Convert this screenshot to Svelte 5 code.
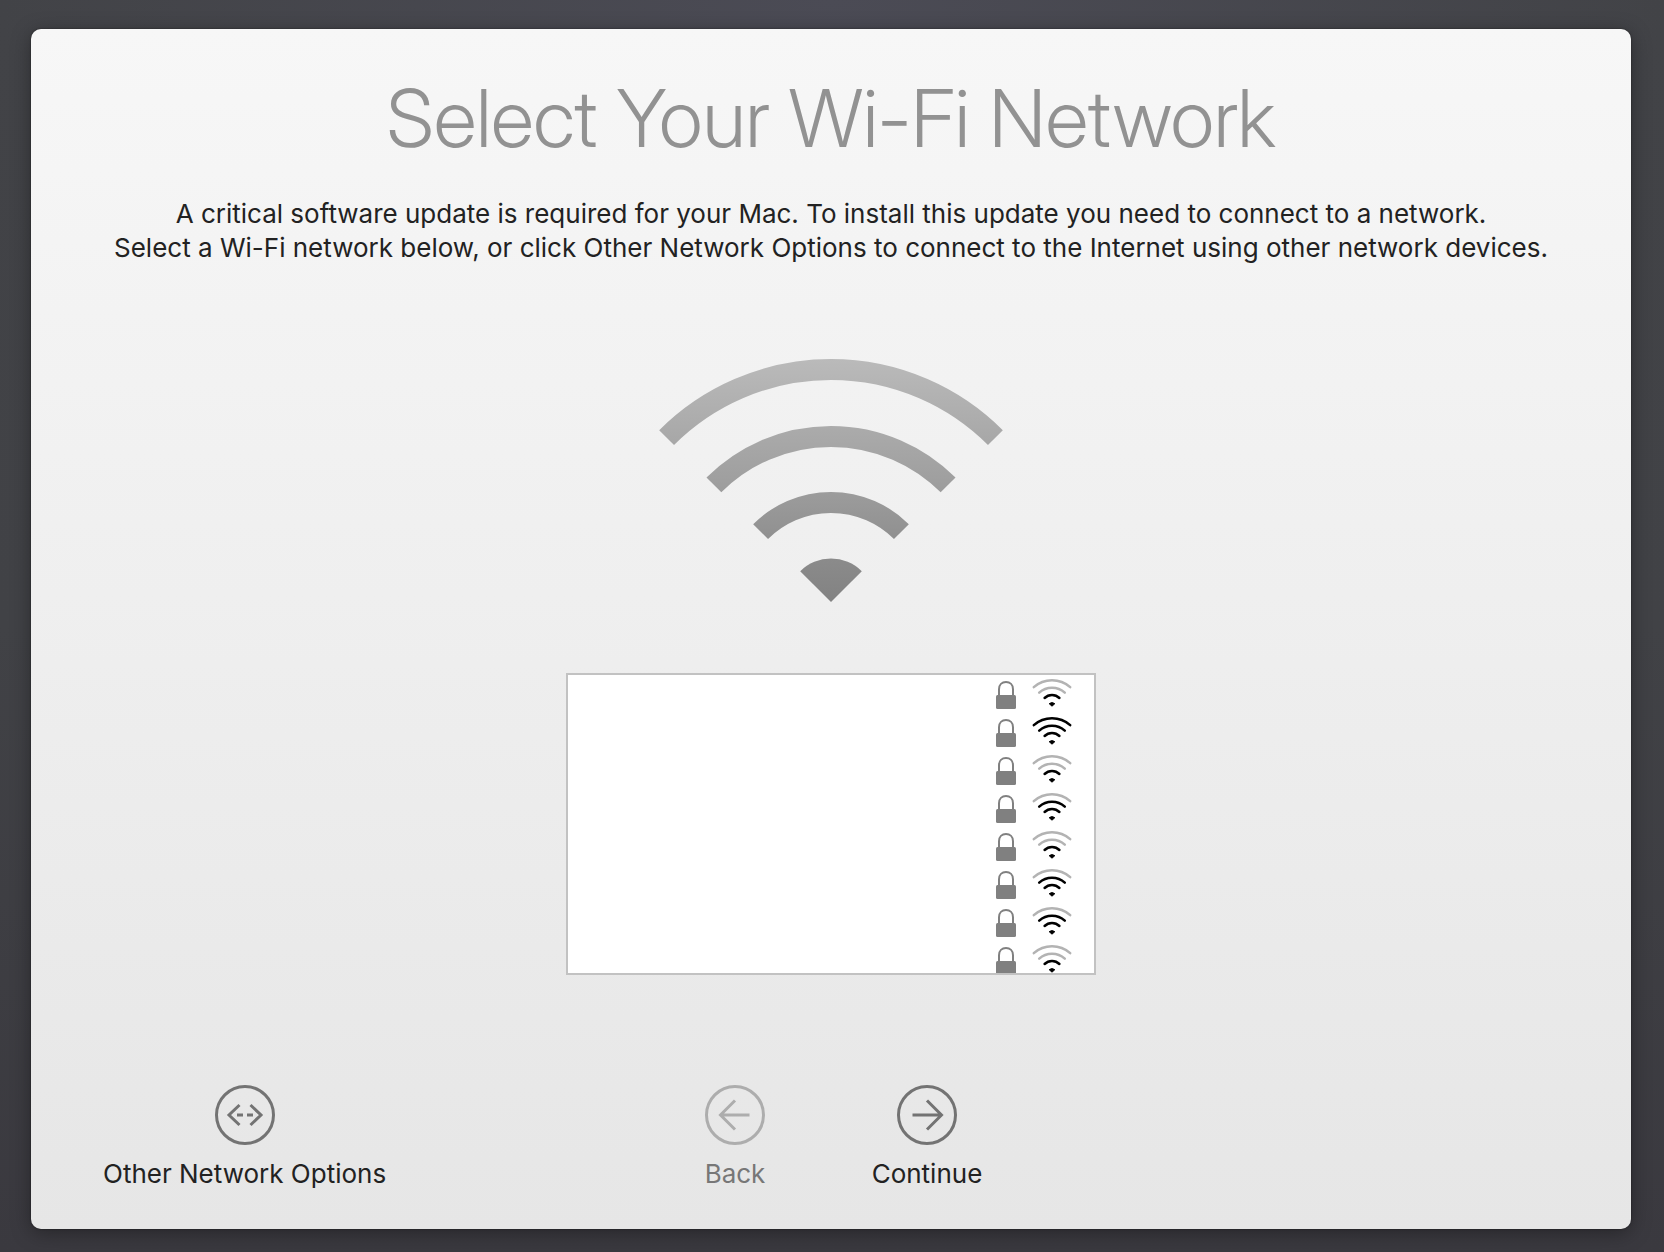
<script>
  // strength: number of lit arcs above the dot
  const networks = [
    { strength: 1 },
    { strength: 3 },
    { strength: 1 },
    { strength: 2 },
    { strength: 1 },
    { strength: 2 },
    { strength: 2 },
    { strength: 1 },
  ];
</script>

<main class="screen">
  <section class="panel" aria-labelledby="title">
    <h1 id="title">Select Your Wi-Fi Network</h1>
    <p class="intro">
      A critical software update is required for your Mac. To install this update you need to connect to a network.<br />
      Select a Wi-Fi network below, or click Other Network Options to connect to the Internet using other network devices.
    </p>

    <svg class="hero" viewBox="-172 -243 344 244" aria-hidden="true">
      <defs>
        <linearGradient id="fade" gradientUnits="userSpaceOnUse" x1="0" y1="-243" x2="0" y2="0">
          <stop offset="0" stop-color="#bababa" />
          <stop offset="0.5" stop-color="#9f9f9f" />
          <stop offset="0.8" stop-color="#8c8c8c" />
          <stop offset="1" stop-color="#828282" />
        </linearGradient>
      </defs>
      <g fill="none" stroke="url(#fade)" stroke-width="21">
        <path d="M-164.4 -164.4A232.5 232.5 0 0 1 164.4 -164.4" />
        <path d="M-117.1 -117.1A165.6 165.6 0 0 1 117.1 -117.1" />
        <path d="M-70.4 -70.4A99.5 99.5 0 0 1 70.4 -70.4" />
      </g>
      <path fill="url(#fade)" d="M0 0L-30.8 -30.8A43.6 43.6 0 0 1 30.8 -30.8Z" />
    </svg>

    <ul class="networks" aria-label="Wi-Fi networks">
      {#each networks as network}
        <li>
          <svg class="lock" viewBox="0 0 20 28" role="img" aria-label="Secured">
            <path d="M3 15V8.2C3 3.8 6 1 10 1s7 2.8 7 7.2V15" fill="none" stroke="#808080" stroke-width="2" />
            <rect y="14" width="20" height="14" rx="1.5" fill="#808080" />
          </svg>
          <svg class="signal" viewBox="0 0 40 30" role="img" aria-label="Signal strength {network.strength} of 3">
            <g fill="none" stroke-width="2.5" stroke-linecap="round">
              <path class:lit={network.strength > 2} d="M1.8 9.1A27.6 27.6 0 0 1 38.2 9.1" />
              <path class:lit={network.strength > 1} d="M7.2 14.6A19 19 0 0 1 32.8 14.6" />
              <path class:lit={network.strength > 0} d="M12.6 20A10.6 10.6 0 0 1 27.4 20" />
            </g>
            <path d="M17.2 25.7Q20 23.5 22.8 25.7L20 28.2Z" fill="#000" stroke="#000" stroke-linejoin="round" />
          </svg>
        </li>
      {/each}
    </ul>

    <nav class="actions" aria-label="Setup">
      <button type="button" class="options">
        <svg viewBox="0 0 60 60" aria-hidden="true">
          <circle cx="30" cy="30" r="28.5" />
          <path d="M24.5 20L14 30L24.5 40M35.5 20L46 30L35.5 40M22 30h6M32 30h6" />
        </svg>
        Other Network Options
      </button>
      <div class="steps">
        <button type="button" disabled>
          <svg viewBox="0 0 60 60" aria-hidden="true">
            <circle cx="30" cy="30" r="28.5" />
            <path d="M30 15.5L15.5 30L30 44.5M16 30H44.5" />
          </svg>
          Back
        </button>
        <button type="button">
          <svg viewBox="0 0 60 60" aria-hidden="true">
            <circle cx="30" cy="30" r="28.5" />
            <path d="M30 15.5L44.5 30L30 44.5M44 30H15.5" />
          </svg>
          Continue
        </button>
      </div>
    </nav>
  </section>
</main>

<style>
  :global(body) {
    margin: 0;
  }

  .screen {
    box-sizing: border-box;
    display: flex;
    min-height: 100vh;
    padding: 29px 33px 23px 31px;
    background:
      radial-gradient(ellipse 50% 30% at 50% 0, #4b4b55, transparent),
      linear-gradient(#424347, #414246 50%, #3a393f);
    font-family: Inter, "Liberation Sans", sans-serif;
    color: #222;
  }

  .panel {
    box-sizing: border-box;
    flex: 1;
    display: flex;
    flex-direction: column;
    align-items: center;
    padding: 40px 60px 38px;
    border-radius: 10px;
    background: linear-gradient(#f7f7f7, #e6e6e6);
    box-shadow: 0 4px 20px rgb(0 0 0 / 35%), 0 0 2px rgb(0 0 0 / 50%);
  }

  h1 {
    margin: 0;
    font-family: "Inter Display", Inter, "Liberation Sans", sans-serif;
    font-size: 80px;
    font-weight: 350;
    line-height: 98px;
    text-align: center;
    color: #929292;
  }

  .intro {
    margin: 30px 0 0;
    font-size: 26px;
    line-height: 34px;
    text-align: center;
  }

  .hero {
    width: 344px;
    height: 244px;
    margin-top: 94px;
  }

  .networks {
    box-sizing: border-box;
    width: 530px;
    max-width: 100%;
    height: 302px;
    margin: 70px 0 0;
    padding: 0;
    overflow: hidden;
    border: 2px solid #c2c2c2;
    background: #fff;
    list-style: none;
  }

  .networks li {
    display: flex;
    justify-content: flex-end;
    align-items: flex-start;
    gap: 16px;
    height: 38px;
    padding-right: 22px;
  }

  .lock {
    width: 20px;
    height: 28px;
    margin-top: 6px;
  }

  .signal {
    width: 40px;
    height: 30px;
    margin-top: 3px;
  }

  .signal g path {
    stroke: #b3b3b3;
  }

  .signal g .lit {
    stroke: #000;
  }

  .actions {
    display: grid;
    grid-template-columns: 1fr auto 1fr;
    width: 100%;
    margin-top: auto;
  }

  .options {
    justify-self: start;
  }

  .steps {
    display: grid;
    grid-template-columns: 192px 192px;
  }

  button {
    display: flex;
    flex-direction: column;
    align-items: center;
    gap: 12px;
    padding: 0 12px;
    border: 0;
    background: none;
    font: 26px/34px Inter, "Liberation Sans", sans-serif;
    white-space: nowrap;
    color: #222;
  }

  button svg {
    width: 60px;
    height: 60px;
    fill: none;
    stroke: #737373;
    stroke-width: 3;
  }

  button:disabled {
    color: #777;
  }

  button:disabled svg {
    stroke: #adadad;
  }
</style>
